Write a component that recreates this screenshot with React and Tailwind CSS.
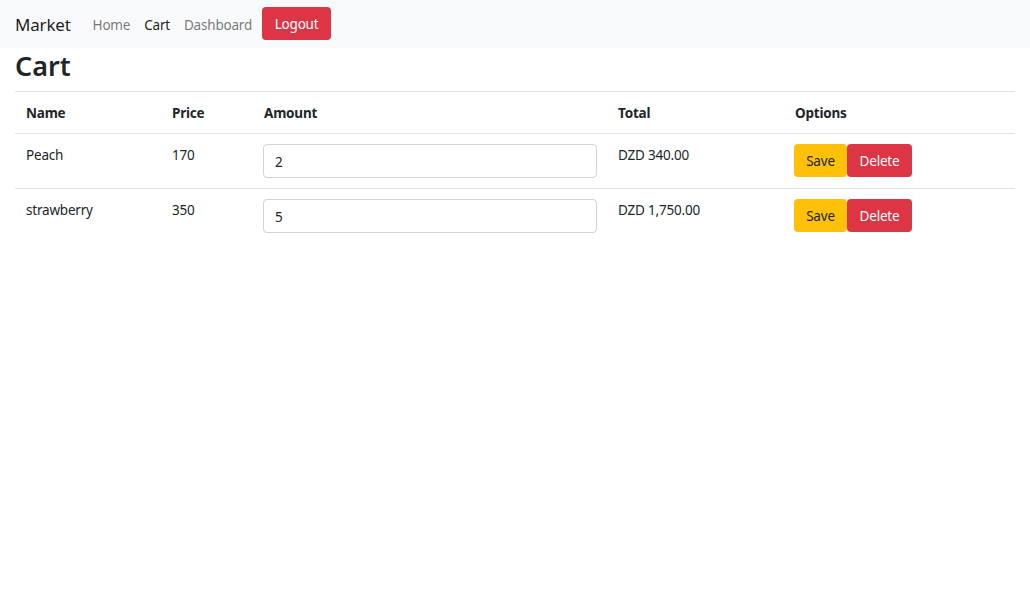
export default function App() {
  const rows = [
    { name: "Peach", price: "170", amount: "2", total: "DZD 340.00" },
    { name: "strawberry", price: "350", amount: "5", total: "DZD 1,750.00" },
  ];
  return (
    <div className="min-h-screen bg-white text-[#212529] text-[13.5px] leading-[21px] tracking-[-0.2px]" style={{ fontFamily: '"Noto Sans", sans-serif' }}>
      <nav className="h-[48px] bg-[#f8f9fa] flex items-center px-[15px]">
        <span className="text-[17px] text-[rgba(0,0,0,0.9)] mr-[15px] mt-[1px]">Market</span>
        <a className="px-[7px] mt-[2px] text-[rgba(0,0,0,0.55)]">Home</a>
        <a className="px-[7px] mt-[2px] text-[rgba(0,0,0,0.9)]">Cart</a>
        <a className="px-[7px] mt-[2px] text-[rgba(0,0,0,0.55)]">Dashboard</a>
        <button className="ml-[3px] mt-[-1px] h-[33px] w-[69px] pt-[2px] rounded-[4px] bg-[#dc3545] text-white">Logout</button>
      </nav>
      <div className="px-[15px]">
        <h1 className="text-[27px] leading-[36px] font-semibold mb-[7px] tracking-normal">Cart</h1>
        <table className="w-full border-collapse border-t border-[#dee2e6]">
          <thead>
            <tr className="border-b border-[#dee2e6]">
              <th className="w-[146px] text-left font-bold px-[11px] pt-[11px] pb-[9px]">Name</th>
              <th className="w-[92px] text-left font-bold px-[11px] pt-[11px] pb-[9px]">Price</th>
              <th className="w-[354px] text-left font-bold px-[11px] pt-[11px] pb-[9px]">Amount</th>
              <th className="w-[177px] text-left font-bold px-[11px] pt-[11px] pb-[9px]">Total</th>
              <th className="text-left font-bold px-[11px] pt-[11px] pb-[9px]">Options</th>
            </tr>
          </thead>
          <tbody>
            {rows.map((r, i) => (
              <tr key={r.name} className={i === 0 ? "border-b border-[#dee2e6]" : ""}>
                <td className="align-top px-[11px] pt-[11px] pb-[9px]">{r.name}</td>
                <td className="align-top px-[11px] pt-[11px] pb-[9px]">{r.price}</td>
                <td className="align-top px-[10px] py-[10px]">
                  <input
                    defaultValue={r.amount}
                    className="block w-full h-[34px] px-[11px] pt-[1px] border border-[#ced4da] rounded-[4px] text-[#212529] outline-none"
                  />
                </td>
                <td className="align-top px-[11px] pt-[11px] pb-[9px]">{r.total}</td>
                <td className="align-top px-[10px] py-[10px]">
                  <div className="flex">
                    <button className="h-[33px] w-[53px] pt-[1px] rounded-[4px] bg-[#ffc107] text-[#212529]">Save</button>
                    <button className="h-[33px] w-[65px] pt-[1px] rounded-[4px] bg-[#dc3545] text-white">Delete</button>
                  </div>
                </td>
              </tr>
            ))}
          </tbody>
        </table>
      </div>
    </div>
  );
}
